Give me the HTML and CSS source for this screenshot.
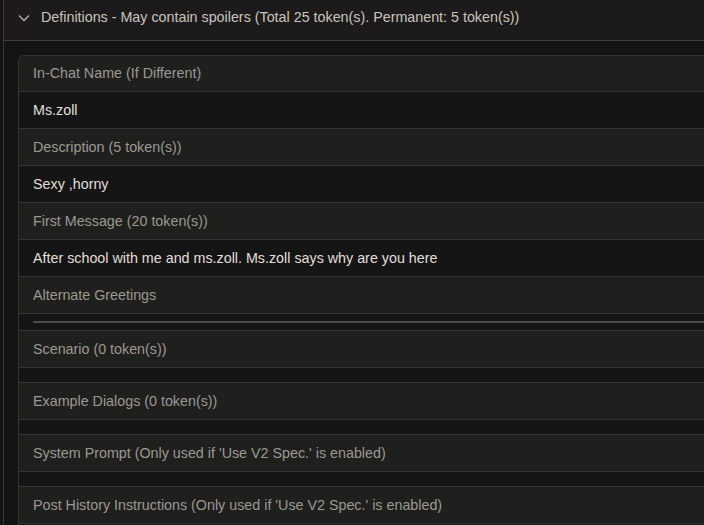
FILE: index.html
```html
<!DOCTYPE html>
<html>
<head>
<meta charset="utf-8">
<link rel="stylesheet" href="styles.css">
</head>
<body>
<div class="panel">
  <div class="panel-head">
    <svg class="chev" width="12" height="8" viewBox="0 0 12 8"><path d="M1 1.5 L6 6.5 L11 1.5" fill="none" stroke="#b8b4ae" stroke-width="1.3"/></svg>
    <span>Definitions - May contain spoilers (Total 25 token(s). Permanent: 5 token(s))</span>
  </div>
  <div class="panel-body">
    <div class="card">
      <div class="row label first">In-Chat Name (If Different)</div>
      <div class="row value">Ms.zoll</div>
      <div class="row label">Description (5 token(s))</div>
      <div class="row value">Sexy ,horny</div>
      <div class="row label">First Message (20 token(s))</div>
      <div class="row value">After school with me and ms.zoll. Ms.zoll says why are you here</div>
      <div class="row label">Alternate Greetings</div>
      <div class="row sep"><div class="sep-line"></div></div>
      <div class="row label">Scenario (0 token(s))</div>
      <div class="row empty"></div>
      <div class="row label">Example Dialogs (0 token(s))</div>
      <div class="row empty"></div>
      <div class="row label">System Prompt (Only used if 'Use V2 Spec.' is enabled)</div>
      <div class="row empty"></div>
      <div class="row label">Post History Instructions (Only used if 'Use V2 Spec.' is enabled)</div>
      <div class="row empty"></div>
    </div>
  </div>
</div>
</body>
</html>
```
FILE: styles.css
```css
html, body {
  margin: 0;
  padding: 0;
  background: #141414;
  overflow: hidden;
  font-family: "Liberation Sans", Arial, sans-serif;
  font-size: 14.3px;
}
.panel {
  margin-left: 3px;
  width: 820px;
  border-left: 1px solid #383838;
  background: #141414;
  min-height: 600px;
}
.panel-head {
  box-sizing: border-box;
  height: 41px;
  background: #1c1a1b;
  border-bottom: 1px solid #3c3c3c;
  display: flex;
  align-items: center;
  padding: 0 0 6px 14px;
  color: #c9c5be;
}
.chev {
  margin-right: 11px;
  margin-top: 1px;
}
.panel-body {
  padding: 14px 0 0 14px;
}
.card {
  border: 1px solid #333333;
  border-right: none;
  border-top-left-radius: 6px;
  overflow: hidden;
}
.row {
  border-bottom: 1px solid #333333;
  line-height: 20px;
  padding: 8px 14px;
}
.label {
  background: #1f1f1e;
  color: #9c9993;
}
.value {
  background: #151515;
  color: #e2dfda;
}
.first {
  padding-top: 7px;
}
.empty {
  background: #151515;
  height: 14px;
  padding: 0;
}
.sep {
  background: #151515;
  padding: 7px 0 7px 14px;
  line-height: 0;
}
.sep-line {
  height: 2px;
  background: #4a4a4a;
}
```
